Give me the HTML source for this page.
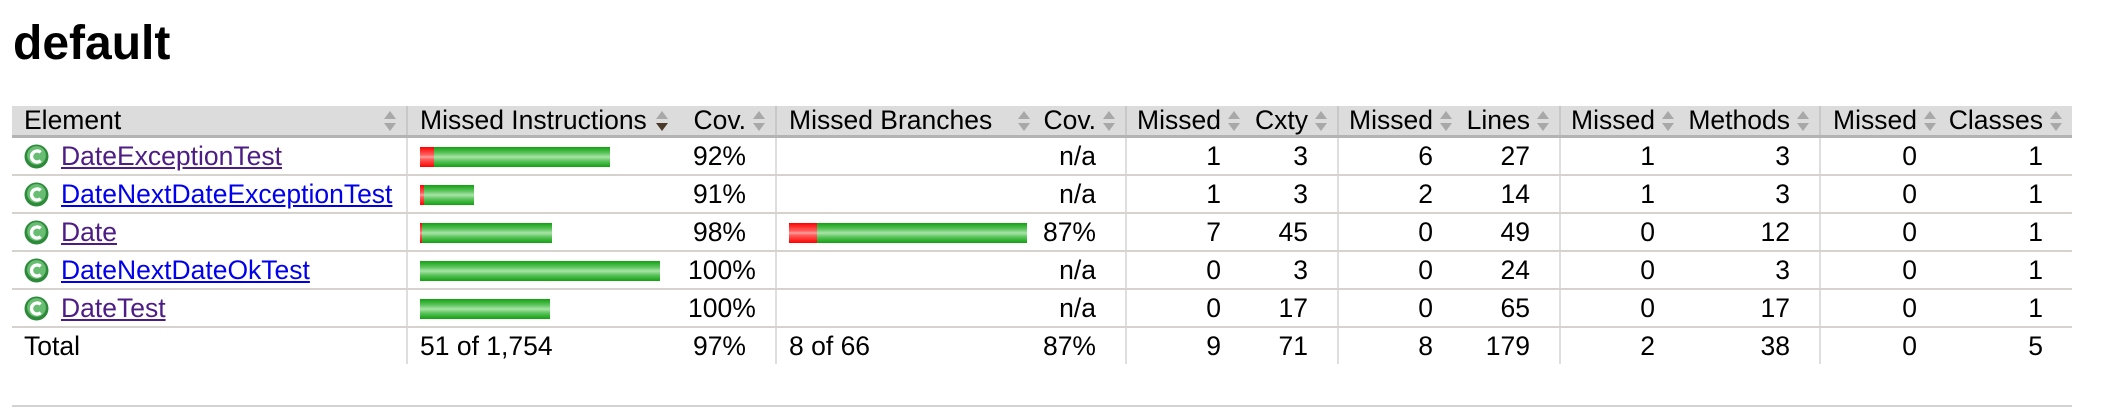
<!DOCTYPE html>
<html><head><meta charset="utf-8">
<style>
html,body{margin:0;padding:0;background:#fff;width:2128px;height:418px;overflow:hidden;font-family:"Liberation Sans",Arial,sans-serif;}
h1{position:absolute;left:13px;top:14px;margin:0;font-size:48px;font-weight:bold;line-height:60px;color:#000;}
table{position:absolute;left:12px;top:106px;border-collapse:collapse;table-layout:fixed;width:2060px;font-size:26.5px;}
td{padding:0;white-space:nowrap;overflow:hidden;position:relative;}
thead td{background:#dcdcdc;height:29px;line-height:29px;border-bottom:3px solid #b3b3b3;}
tbody td{height:36px;line-height:36px;border-bottom:2px solid #d6d3ce;}
tfoot td{height:36px;line-height:36px;}
.r{text-align:right;padding-right:29px;}
.l{padding-left:12px;}
.g{border-left:2px solid #dedede;}
thead .g{border-left:2px solid #c8c8c8;}
.s{position:absolute;right:9px;top:3px;width:14px;height:24px;}
.el{padding-left:49px;}
.ic{position:absolute;left:12px;top:6px;width:25px;height:25px;}
a{text-decoration:underline;}
.v{color:#4d1c85;}
.u{color:#0000ee;}
.bar{display:flex;height:20px;margin-top:1px;}
.rd{height:20px;background:linear-gradient(#f00 0%,#ff6060 40%,#ffa0a0 50%,#ff6060 60%,#f00 100%);}
.gr{height:20px;background:linear-gradient(#12a012 0%,#5cc45c 30%,#a8e4a8 50%,#5cc45c 70%,#12a012 100%);}
.bc{padding-left:12px;vertical-align:middle;}
hr{position:absolute;left:12px;top:405px;width:2060px;margin:0;border:0;border-top:2px solid #d3d3d3;}
</style></head><body>
<h1>default</h1>
<svg width="0" height="0" style="position:absolute">
<defs>
<symbol id="so" viewBox="0 0 14 24"><path d="M7 2 L13 10 L1 10 Z" fill="#a8a8a8"/><path d="M7 22 L13 14 L1 14 Z" fill="#a8a8a8"/></symbol>
<symbol id="sd" viewBox="0 0 14 24"><path d="M7 2 L13 10 L1 10 Z" fill="#a8a8a8"/><path d="M7 22 L13 14 L1 14 Z" fill="#4a3a2a"/></symbol>
<symbol id="cl" viewBox="0 0 24 24"><circle cx="12" cy="12" r="11.5" fill="#2c8a3a"/><circle cx="12" cy="11" r="9" fill="#68bd72"/><path d="M16 8 A5.3 5.3 0 1 0 16 16" fill="none" stroke="#fff" stroke-width="3.2"/></symbol>
</defs></svg>
<table>
<colgroup>
<col style="width:395px"><col style="width:281px"><col style="width:88px">
<col style="width:264px"><col style="width:86px">
<col style="width:124px"><col style="width:88px">
<col style="width:124px"><col style="width:98px">
<col style="width:124px"><col style="width:136px">
<col style="width:126px"><col style="width:126px">
</colgroup>
<thead><tr>
<td class="l">Element<svg class="s"><use href="#so"/></svg></td>
<td class="l g">Missed Instructions<svg class="s" style="right:19px"><use href="#sd"/></svg></td>
<td class="r">Cov.<svg class="s"><use href="#so"/></svg></td>
<td class="l g">Missed Branches<svg class="s"><use href="#so"/></svg></td>
<td class="r">Cov.<svg class="s"><use href="#so"/></svg></td>
<td class="r g">Missed<svg class="s"><use href="#so"/></svg></td>
<td class="r">Cxty<svg class="s"><use href="#so"/></svg></td>
<td class="r g">Missed<svg class="s"><use href="#so"/></svg></td>
<td class="r">Lines<svg class="s"><use href="#so"/></svg></td>
<td class="r g">Missed<svg class="s"><use href="#so"/></svg></td>
<td class="r">Methods<svg class="s"><use href="#so"/></svg></td>
<td class="r g">Missed<svg class="s"><use href="#so"/></svg></td>
<td class="r">Classes<svg class="s"><use href="#so"/></svg></td>
</tr></thead>
<tbody>
<tr><td class="el"><svg class="ic"><use href="#cl"/></svg><a class="v">DateExceptionTest</a></td>
<td class="bc g"><div class="bar"><div class="rd" style="width:14px"></div><div class="gr" style="width:176px"></div></div></td>
<td class="r">92%</td><td class="g"></td><td class="r">n/a</td>
<td class="r g">1</td><td class="r">3</td><td class="r g">6</td><td class="r">27</td><td class="r g">1</td><td class="r">3</td><td class="r g">0</td><td class="r">1</td></tr>
<tr><td class="el"><svg class="ic"><use href="#cl"/></svg><a class="u">DateNextDateExceptionTest</a></td>
<td class="bc g"><div class="bar"><div class="rd" style="width:4px"></div><div class="gr" style="width:50px"></div></div></td>
<td class="r">91%</td><td class="g"></td><td class="r">n/a</td>
<td class="r g">1</td><td class="r">3</td><td class="r g">2</td><td class="r">14</td><td class="r g">1</td><td class="r">3</td><td class="r g">0</td><td class="r">1</td></tr>
<tr><td class="el"><svg class="ic"><use href="#cl"/></svg><a class="v">Date</a></td>
<td class="bc g"><div class="bar"><div class="rd" style="width:2px"></div><div class="gr" style="width:130px"></div></div></td>
<td class="r">98%</td>
<td class="bc g"><div class="bar"><div class="rd" style="width:28px"></div><div class="gr" style="width:210px"></div></div></td>
<td class="r">87%</td>
<td class="r g">7</td><td class="r">45</td><td class="r g">0</td><td class="r">49</td><td class="r g">0</td><td class="r">12</td><td class="r g">0</td><td class="r">1</td></tr>
<tr><td class="el"><svg class="ic"><use href="#cl"/></svg><a class="u">DateNextDateOkTest</a></td>
<td class="bc g"><div class="bar"><div class="gr" style="width:240px"></div></div></td>
<td class="r">100%</td><td class="g"></td><td class="r">n/a</td>
<td class="r g">0</td><td class="r">3</td><td class="r g">0</td><td class="r">24</td><td class="r g">0</td><td class="r">3</td><td class="r g">0</td><td class="r">1</td></tr>
<tr><td class="el"><svg class="ic"><use href="#cl"/></svg><a class="v">DateTest</a></td>
<td class="bc g"><div class="bar"><div class="gr" style="width:130px"></div></div></td>
<td class="r">100%</td><td class="g"></td><td class="r">n/a</td>
<td class="r g">0</td><td class="r">17</td><td class="r g">0</td><td class="r">65</td><td class="r g">0</td><td class="r">17</td><td class="r g">0</td><td class="r">1</td></tr>
</tbody>
<tfoot><tr>
<td class="l">Total</td><td class="l g">51 of 1,754</td><td class="r">97%</td>
<td class="l g">8 of 66</td><td class="r">87%</td>
<td class="r g">9</td><td class="r">71</td><td class="r g">8</td><td class="r">179</td><td class="r g">2</td><td class="r">38</td><td class="r g">0</td><td class="r">5</td>
</tr></tfoot>
</table>
<hr>
</body></html>
